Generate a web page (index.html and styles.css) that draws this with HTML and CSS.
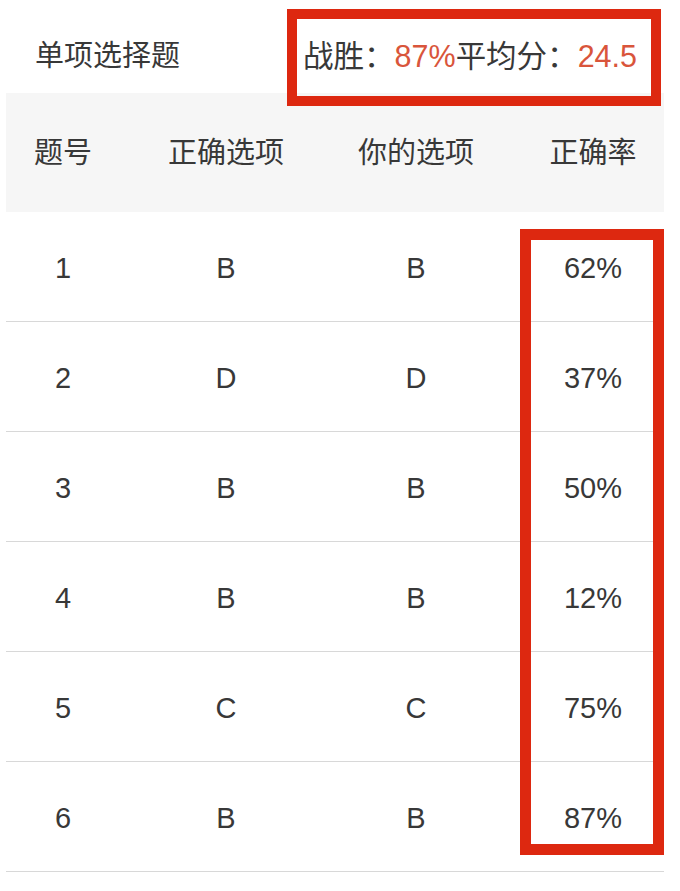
FILE: index.html
```html
<!DOCTYPE html>
<html lang="zh-CN">
<head>
<meta charset="utf-8">
<title>单项选择题</title>
<link rel="stylesheet" href="styles.css">
</head>
<body>
<div class="page">
  <div class="titlebar">
    <div class="title">单项选择题</div>
    <div class="stats">战胜：<span class="hl">87%</span>平均分：<span class="hl">24.5</span></div>
  </div>
  <div class="table">
    <div class="row head">
      <div class="cell">题号</div>
      <div class="cell">正确选项</div>
      <div class="cell">你的选项</div>
      <div class="cell last">正确率</div>
    </div>
    <div class="body">
      <div class="row"><div class="cell">1</div><div class="cell">B</div><div class="cell">B</div><div class="cell last">62%</div></div>
      <div class="row"><div class="cell">2</div><div class="cell">D</div><div class="cell">D</div><div class="cell last">37%</div></div>
      <div class="row"><div class="cell">3</div><div class="cell">B</div><div class="cell">B</div><div class="cell last">50%</div></div>
      <div class="row"><div class="cell">4</div><div class="cell">B</div><div class="cell">B</div><div class="cell last">12%</div></div>
      <div class="row"><div class="cell">5</div><div class="cell">C</div><div class="cell">C</div><div class="cell last">75%</div></div>
      <div class="row"><div class="cell">6</div><div class="cell">B</div><div class="cell">B</div><div class="cell last">87%</div></div>
    </div>
  </div>
</div>
</body>
</html>
```

FILE: styles.css
```css
html, body {
  margin: 0;
  padding: 0;
  background: #ffffff;
}

body {
  font-family: "Liberation Sans", "Noto Sans CJK SC", sans-serif;
  color: #383838;
  font-size: 29px;
}

.page {
  width: 680px;
}

.titlebar {
  position: relative;
  height: 93px;
  box-sizing: border-box;
  padding: 19px 43px 0 35px;
  display: flex;
  align-items: center;
  justify-content: space-between;
  z-index: 2;
}

.titlebar::after {
  content: "";
  position: absolute;
  left: 287px;
  right: 19px;
  top: 9px;
  height: 97px;
  box-sizing: border-box;
  border: 10px solid #dd2810;
  pointer-events: none;
}

.title, .stats {
  line-height: 40px;
  white-space: nowrap;
}

.stats {
  font-size: 30.5px;
}

.hl {
  color: #d9553b;
}

.table {
  margin: 0 16px 0 6px;
}

.row {
  display: grid;
  grid-template-columns: 114px 212px 168px 1fr;
  align-items: center;
  height: 110px;
  box-sizing: border-box;
  border-bottom: 1px solid #d8d8d8;
}

.row.head {
  height: 119px;
  background: #f6f6f6;
  border-bottom: none;
}

.cell {
  text-align: center;
  line-height: 40px;
}

.body .cell {
  padding-top: 2px;
}

.cell.last {
  padding-left: 22px;
}

.body {
  position: relative;
}

.body::after {
  content: "";
  position: absolute;
  left: 514px;
  right: 0;
  top: 17px;
  bottom: 17px;
  box-sizing: border-box;
  border: 11px solid #dd2810;
  pointer-events: none;
}
```
